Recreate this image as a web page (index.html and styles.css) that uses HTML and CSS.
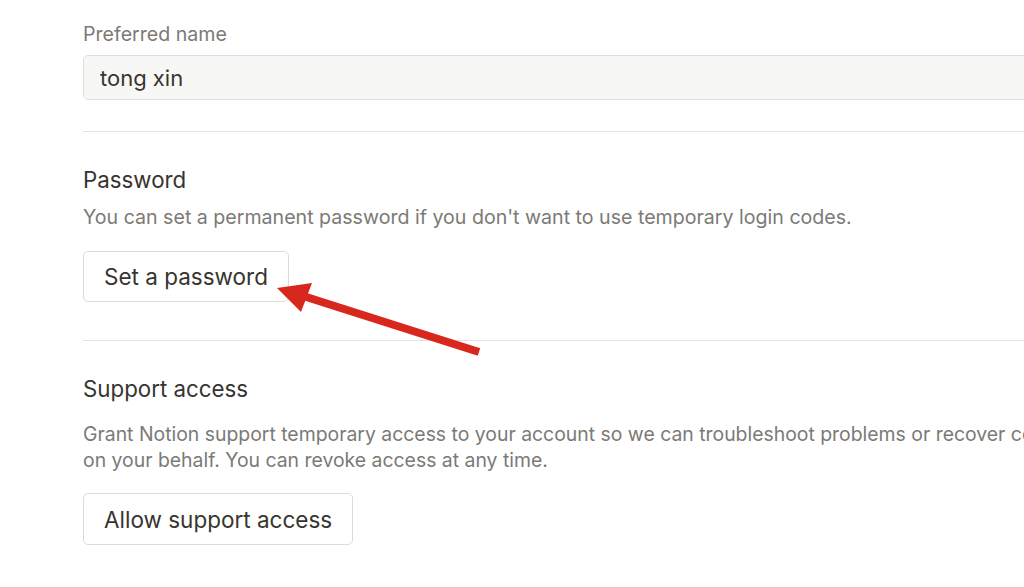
FILE: index.html
```html
<!DOCTYPE html>
<html lang="en">
<head>
  <meta charset="UTF-8">
  <meta name="viewport" content="width=device-width, initial-scale=1.0">
  <title>My account</title>
  <link rel="stylesheet" href="styles.css">
</head>
<body>
  <div class="settings">
    <label class="field-label" for="preferred-name">Preferred name</label>
    <input class="text-input" type="text" id="preferred-name" value="tong xin">

    <div class="divider"></div>

    <div class="section">
      <h2 class="section-title">Password</h2>
      <p class="section-desc">You can set a permanent password if you don't want to use temporary login codes.</p>
      <button class="btn" id="set-password">Set a password</button>
    </div>

    <div class="divider divider-lower"></div>

    <div class="section section-support">
      <h2 class="section-title">Support access</h2>
      <p class="section-desc">Grant Notion support temporary access to your account so we can troubleshoot problems or recover content on your behalf. You can revoke access at any time.</p>
      <button class="btn" id="allow-support">Allow support access</button>
    </div>
  </div>

  <!-- annotation arrow pointing at the password button -->
  <svg class="arrow" width="1024" height="587" viewBox="0 0 1024 587">
    <line x1="479" y1="352" x2="300" y2="295" stroke="#d8281d" stroke-width="8"/>
    <polygon points="277,288 312,283 301,312" fill="#d8281d"/>
  </svg>
</body>
</html>
```

FILE: styles.css
```css
body {
  font-family: Inter, "Noto Sans", sans-serif;
  margin: 0;
  padding: 0;
  background-color: #fff;
  color: #37352f;
  overflow: hidden;
  height: 587px;
  position: relative;
}

.settings {
  width: 1015px;
  padding: 21px 0 0 83px;
  display: flex;
  flex-direction: column;
}

.field-label {
  font-size: 19.6px;
  line-height: 26px;
  color: #7b7a76;
}

.text-input {
  margin-top: 8px;
  height: 45px;
  box-sizing: border-box;
  padding: 0 16px;
  font-family: inherit;
  font-size: 22px;
  color: #37352f;
  background-color: #f7f7f5;
  border: 1px solid #dfdedb;
  border-radius: 5px;
  outline: none;
}

.divider {
  margin-top: 31px;
  height: 1px;
  background-color: #e3e2e0;
}

.divider-lower {
  margin-top: 38px;
}

.section {
  display: flex;
  flex-direction: column;
  align-items: flex-start;
}

.section-title {
  margin: 33px 0 0;
  font-size: 22.3px;
  font-weight: 400;
  line-height: 30px;
}

.section-desc {
  margin: 9px 0 0;
  font-size: 19.6px;
  line-height: 26px;
  color: #7b7a76;
}

.section-support .section-desc {
  margin-top: 17px;
  font-size: 19.4px;
}

.btn {
  margin-top: 21px;
  height: 51px;
  padding: 0 20px;
  font-family: inherit;
  font-size: 22.5px;
  color: #37352f;
  background-color: #fff;
  border: 1px solid #dcdbd8;
  border-radius: 5px;
  cursor: pointer;
}

.section-support .btn {
  margin-top: 20px;
  height: 52px;
}

.arrow {
  position: absolute;
  top: 0;
  left: 0;
  pointer-events: none;
}
```
